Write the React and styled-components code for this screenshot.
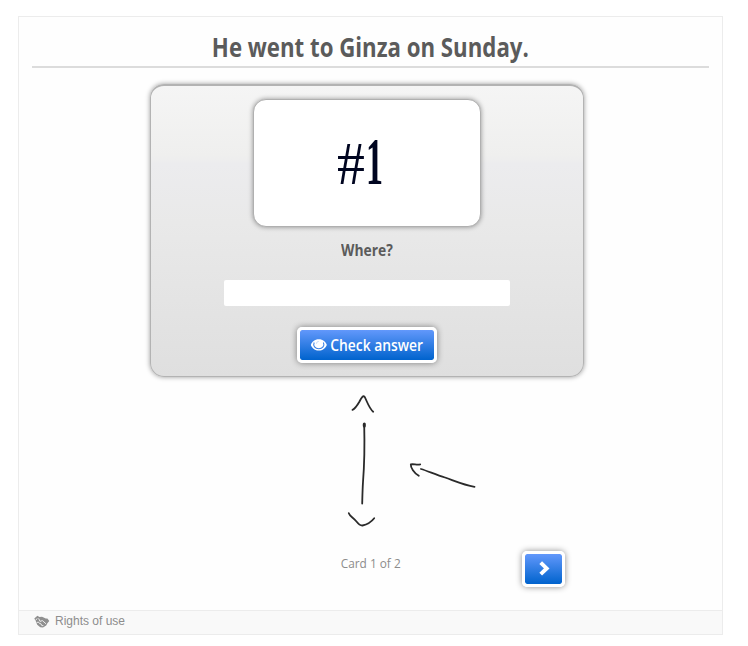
import React from "react";
import styled, { createGlobalStyle } from "styled-components";

const App = () => {
  return (
    <>
      <GlobalStyle />
      <Frame>
        <Content>
          <Title>
            <Squeeze x={0.855}>He went to Ginza on Sunday.</Squeeze>
          </Title>
          <Card>
            <Picture>
              <Hash>#</Hash>
              <One>1</One>
            </Picture>
            <Question>
              <Squeeze x={0.865}>Where?</Squeeze>
            </Question>
            <AnswerInput aria-label="Your answer" />
            <Button width="140px">
              <EyeIcon />
              <ButtonLabel>
                <Squeeze x={0.865}>Check answer</Squeeze>
              </ButtonLabel>
            </Button>
          </Card>
          <Sketch />
          <Navigation>
            <Progress>
              <Squeeze x={0.89}>Card 1 of 2</Squeeze>
            </Progress>
            <Button width="43px" aria-label="Next card">
              <ChevronIcon />
            </Button>
          </Navigation>
        </Content>
        <Footer>
          <HandshakeIcon />
          <span>Rights of use</span>
        </Footer>
      </Frame>
    </>
  );
};

const EyeIcon = () => (
  <svg width="17" height="12" viewBox="0 0 17 12">
    <path
      d="M8.8 0.3C13 0.3 15.7 3 16.8 5.9C15.4 9.3 12.6 11.6 8.8 11.6C5 11.6 2.2 9.3 0.8 5.9C1.9 3 4.6 0.3 8.8 0.3Z"
      fill="#fff"
    />
    <path
      d="M4.2 3.6C2.6 7 5.2 9.7 8.8 9.7C12.4 9.7 15 7 13.4 3.6"
      fill="none"
      stroke="#3b82e6"
      strokeWidth="1.1"
    />
    <path
      d="M6.5 4.7C6.5 3.2 7.5 2.5 8.7 2.5"
      fill="none"
      stroke="#a8c7f6"
      strokeWidth="0.7"
    />
  </svg>
);

const ChevronIcon = () => (
  <svg width="12" height="16" viewBox="0 0 12 16">
    <path
      d="M2.7 1.6L8.7 7.4L2.7 13.2"
      fill="none"
      stroke="#fff"
      strokeWidth="3.9"
    />
  </svg>
);

const HandshakeIcon = () => (
  <svg width="16" height="13" viewBox="0 0 16 13">
    <path
      d="M0.3 3.4L3.4 0.8L5.4 2L8 1.7L11.8 3.6L13.4 3.4L15.3 6L13.4 8.2L12.2 10.4L9 12.4L6.3 12.2L3.2 9.8L2 6.6Z"
      fill="#8f8f8f"
    />
    <path
      d="M1.6 5.4L3.2 3.4M2.8 7.6L4.4 7L5.6 8.6L7 8.8L7.8 10.6L9.4 10.6M4.6 3.4L6 6.4L8.4 5.6L12 8.8"
      fill="none"
      stroke="#f5f5f5"
      strokeWidth="0.9"
    />
  </svg>
);

// hand drawn arrows under the card
const Sketch = () => (
  <SketchArea viewBox="0 0 160 150">
    <g
      fill="none"
      stroke="#2a2a2a"
      strokeWidth="1.8"
      strokeLinecap="round"
      strokeLinejoin="round"
    >
      <path d="M22.5 24.8C24.5 24 27.5 20 29.5 16.5C31.5 12.5 33 10.3 34.5 11.6C36.5 15 39 23.5 43.2 26.7" />
      <path d="M34.2 39.5C34.7 59 34.5 78 33 97C32.5 105 32.4 111 32.2 118.5" />
      <path d="M34.3 39V41" strokeWidth="3" />
      <path d="M18.8 128.2C20 131.5 23 132.3 26 136C28 138.5 30 140.8 32.5 140.5C37 139.5 42 136 44.2 133.2" />
      <path d="M90.2 79.4C87 80.1 83.4 78.8 80.8 79.4C80.5 82.5 84 88 88.8 90.8" />
      <path d="M91 84C98 86 106 90 115 92.5C125 96 134 100 144.5 101.8" />
    </g>
  </SketchArea>
);

const GlobalStyle = createGlobalStyle`
  * {
    box-sizing: border-box;
  }
  body {
    margin: 0;
    background: #fff;
    color: #5b5b5b;
    font-family: "Open Sans", "Noto Sans", sans-serif;
  }
`;

const Frame = styled.main`
  width: 705px;
  height: 619px;
  margin: 16px 0 0 18px;
  display: flex;
  flex-direction: column;
  border: 1px solid #ececec;
  background: #fefefe;
`;

const Content = styled.div`
  flex: 1;
  display: flex;
  flex-direction: column;
  padding: 0 13px;
`;

const Squeeze = styled.span`
  display: inline-block;
  white-space: nowrap;
  transform: scaleX(${({ x }) => x});
`;

const Title = styled.h1`
  height: 51px;
  margin: 0;
  padding-top: 12px;
  border-bottom: 2px solid #dcdcdc;
  font-size: 26px;
  line-height: 36px;
  text-align: center;
`;

const Card = styled.section`
  width: 434px;
  height: 293px;
  margin: 16px 0 0 118px;
  padding-top: 13px;
  display: flex;
  flex-direction: column;
  align-items: center;
  border: 1px solid #b3b3b3;
  border-top-width: 2px;
  border-radius: 14px;
  background: linear-gradient(
    #f5f5f5 0%,
    #efefee 24%,
    #ececee 27%,
    #e9e9e9 47%,
    #dfdfdf 100%
  );
  box-shadow: 0 0 5px rgba(0, 0, 0, 0.4);
`;

const Picture = styled.div`
  width: 228px;
  height: 128px;
  flex: none;
  display: flex;
  justify-content: center;
  align-items: center;
  padding-right: 13px;
  border: 1px solid #b0b0b0;
  border-radius: 13px;
  background: #fff;
  color: #000520;
  font-family: "Liberation Serif", serif;
  line-height: 60px;
  box-shadow: 0 0 5px rgba(0, 0, 0, 0.4);
`;

const Hash = styled.span`
  width: 28px;
  display: flex;
  justify-content: center;
  font-size: 62px;
  transform: scaleX(0.9);
`;

const One = styled.span`
  width: 19px;
  display: flex;
  justify-content: center;
  font-size: 68px;
  font-weight: 700;
  transform: translateY(-2px) scaleX(0.5);
`;

const Question = styled.div`
  height: 20px;
  margin-top: 13px;
  font-size: 16px;
  font-weight: 700;
  line-height: 20px;
`;

const AnswerInput = styled.input`
  width: 286px;
  height: 26px;
  margin: 20px 0 21px;
  padding: 0 6px;
  border: 0;
  border-radius: 2px;
  background: #fff;
`;

const Button = styled.button`
  width: ${({ width }) => width};
  height: 36px;
  flex: none;
  display: flex;
  align-items: center;
  justify-content: center;
  padding: 0;
  border: 3px solid #fff;
  border-radius: 5px;
  background: linear-gradient(#6298fb, #0063cd) padding-box;
  color: #fff;
  font: 600 16px/20px "Open Sans", "Noto Sans", sans-serif;
  box-shadow: 0 0 6px rgba(0, 0, 0, 0.45);
`;

const ButtonLabel = styled.span`
  width: 97px;
  display: flex;
  justify-content: center;
  padding-left: 2px;
`;

const SketchArea = styled.svg`
  width: 160px;
  height: 150px;
  flex: none;
  margin: 8px 0 0 298px;
`;

const Navigation = styled.div`
  display: flex;
  align-items: flex-start;
  padding-left: 300px;
  margin-top: 16px;
`;

const Progress = styled.span`
  width: 78px;
  margin: 3px 112px 0 0;
  display: flex;
  justify-content: center;
  color: #8c8c8c;
  font-size: 13.3px;
  line-height: 19px;
`;

const Footer = styled.footer`
  height: 24px;
  display: flex;
  align-items: flex-start;
  gap: 5px;
  padding: 4px 0 0 15px;
  border-top: 1px solid #ececec;
  background: #f9f9f9;
  color: #8d8d8d;
  font: 12px/13px "Liberation Sans", Arial, sans-serif;
`;

export default App;
